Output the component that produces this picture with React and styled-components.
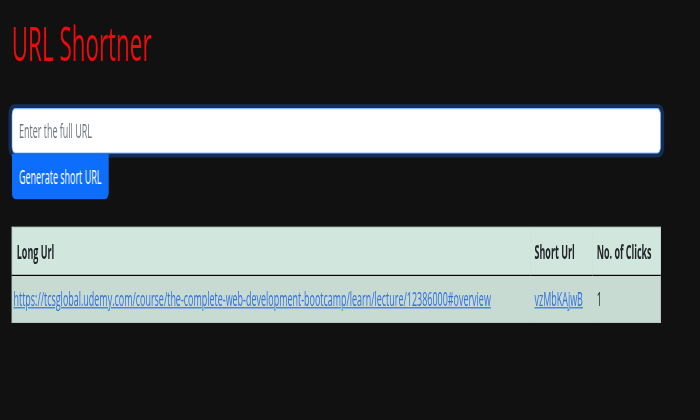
import styled, { createGlobalStyle } from "styled-components";

const GlobalStyle = createGlobalStyle`
    html, body {
        margin: 0;
        background-color: #111111;
        overflow: hidden;
    }
    * {
        box-sizing: border-box;
    }
`

const Stage = styled.main`
    width: 1250px;
    min-height: 350px;
    padding: 12px 70px 0 21px;
    transform: scale(0.56, 1.2);
    transform-origin: 0 0;
    font-family: "Open Sans", "Noto Sans", sans-serif;
    font-size: 16px;
    color: #212529;
`

const Title = styled.h1`
    margin: 0;
    font-size: 40px;
    line-height: 48px;
    font-weight: 500;
    color: #ee0b0b;
`

const Form = styled.form`
    display: flex;
    flex-direction: column;
    align-items: flex-start;
    margin-top: 30px;
`

const Input = styled.input`
    width: 100%;
    height: 38px;
    padding: 6px 12px;
    font-family: inherit;
    font-size: 16px;
    color: #212529;
    background-color: #fff;
    border: 1px solid #86b7fe;
    border-radius: 6px;
    outline: none;
    box-shadow: 0 0 0 3px #142e58, -3px 0 0 3px #142e58, 3px 0 0 3px #142e58;
    &::placeholder {
        color: #6c757d;
    }
`

const Button = styled.button`
    position: relative;
    height: 38px;
    padding: 6px 12px;
    font-family: inherit;
    font-size: 16px;
    color: #fff;
    background-color: #0d6efd;
    border: 1px solid #0d6efd;
    border-radius: 0 0 6px 6px;
`

const Table = styled.table`
    width: 100%;
    margin-top: 23px;
    border-collapse: collapse;
    border-spacing: 0;
    table-layout: fixed;
    background-color: #c7dbd2;
    border: 1px solid #bcd0c7;
`

const HeadRow = styled.tr`
    border-bottom: 1.5px solid #000;
`

const HeadCell = styled.th`
    height: 40px;
    padding: 8px;
    text-align: left;
    font-weight: 700;
    background-color: #d1e7dd;
`

const Cell = styled.td`
    height: 39px;
    padding: 7px ${props => props.$tight ? "2px" : "8px"};
    white-space: nowrap;
`

const Link = styled.a`
    color: #3070e0;
    text-decoration: underline;
`

const rows = [
    {
        long: "https://tcsglobal.udemy.com/course/the-complete-web-development-bootcamp/learn/lecture/12386000#overview",
        short: "vzMbKAjwB",
        clicks: 1
    }
]

export default function App(){
    return(
        <>
            <GlobalStyle />
            <Stage>
                <Title>URL Shortner</Title>
                <Form onSubmit={e => e.preventDefault()}>
                    <Input type="url" placeholder="Enter the full URL" />
                    <Button type="submit">Generate short URL</Button>
                </Form>
                <Table>
                    <colgroup>
                        <col />
                        <col style={{ width: "111px" }} />
                        <col style={{ width: "122px" }} />
                    </colgroup>
                    <thead>
                        <HeadRow>
                            <HeadCell>Long Url</HeadCell>
                            <HeadCell>Short Url</HeadCell>
                            <HeadCell>No. of Clicks</HeadCell>
                        </HeadRow>
                    </thead>
                    <tbody>
                        {rows.map(row => (
                            <tr key={row.short}>
                                <Cell $tight><Link href={row.long}>{row.long}</Link></Cell>
                                <Cell><Link href={row.short}>{row.short}</Link></Cell>
                                <Cell>{row.clicks}</Cell>
                            </tr>
                        ))}
                    </tbody>
                </Table>
            </Stage>
        </>
    )
}
